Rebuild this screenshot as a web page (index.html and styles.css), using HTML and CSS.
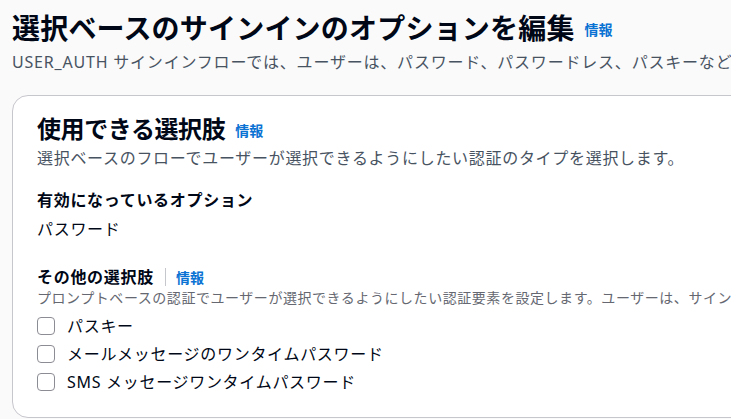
FILE: index.html
```html
<!DOCTYPE html>
<html lang="ja">
<head>
<meta charset="utf-8">
<link rel="stylesheet" href="styles.css">
</head>
<body>
<div class="page">
  <header class="page-header">
    <h1 class="title">選択ベースのサインインのオプションを編集<a class="info info-title" href="#">情報</a></h1>
    <p class="subtitle">USER_AUTH サインインフローでは、ユーザーは、パスワード、パスワードレス、パスキーなどの認証方法から選択してサインインできます。</p>
  </header>
  <section class="card">
    <h2 class="card-title">使用できる選択肢<a class="info info-card" href="#">情報</a></h2>
    <p class="card-desc">選択ベースのフローでユーザーが選択できるようにしたい認証のタイプを選択します。</p>
    <div class="field field-enabled">
      <div class="field-label">有効になっているオプション</div>
      <div class="field-value">パスワード</div>
    </div>
    <div class="field field-other">
      <div class="field-label label-row">その他の選択肢<span class="divider"></span><a class="info info-field" href="#">情報</a></div>
      <div class="field-desc">プロンプトベースの認証でユーザーが選択できるようにしたい認証要素を設定します。ユーザーは、サインイン時にこれらのオプションから選択できます。</div>
      <ul class="checks">
        <li class="check"><span class="box"></span><span class="check-label">パスキー</span></li>
        <li class="check"><span class="box"></span><span class="check-label">メールメッセージのワンタイムパスワード</span></li>
        <li class="check"><span class="box"></span><span class="check-label">SMS メッセージワンタイムパスワード</span></li>
      </ul>
    </div>
  </section>
</div>
</body>
</html>
```
FILE: styles.css
```css
html, body {
  margin: 0;
  padding: 0;
  background: #fafafa;
  overflow: hidden;
  width: 731px;
  height: 419px;
}
body {
  font-family: "Noto Sans", "Noto Sans CJK JP", sans-serif;
  color: #000716;
}
.page {
  padding: 10px 0 0 12px;
}
.page-header {
  display: flex;
  flex-direction: column;
  gap: 4px;
}
.title {
  margin: 0;
  font-size: 28px;
  line-height: 36px;
  font-weight: 700;
  color: #000716;
  white-space: nowrap;
  display: flex;
  align-items: center;
  letter-spacing: 0.2px;
}
.info {
  color: #0972d3;
  text-decoration: none;
  font-weight: 700;
  font-size: 14px;
  line-height: 20px;
  letter-spacing: 0;
}
.info-title {
  margin-left: 10px;
  margin-top: 4px;
}
.subtitle {
  margin: 0;
  font-size: 16px;
  line-height: 24px;
  color: #485362;
  white-space: nowrap;
  letter-spacing: 0.8px;
}
.card {
  margin-top: 21px;
  width: 780px;
  background: #ffffff;
  border: 1px solid #c6c6cd;
  border-radius: 16px;
  padding: 17px 24px 21px 24px;
  box-sizing: border-box;
}
.card-title {
  margin: 0;
  font-size: 24px;
  line-height: 32px;
  font-weight: 700;
  display: flex;
  align-items: center;
  white-space: nowrap;
  letter-spacing: -0.4px;
}
.info-card {
  margin-left: 10px;
  margin-top: 3px;
}
.card-desc {
  margin: 2px 0 0 0;
  font-size: 16px;
  line-height: 22px;
  color: #485362;
  white-space: nowrap;
  letter-spacing: 0.7px;
}
.field-enabled {
  margin-top: 20px;
}
.field-label {
  font-size: 16px;
  line-height: 22px;
  font-weight: 700;
  white-space: nowrap;
  letter-spacing: 0.7px;
}
.field-value {
  margin-top: 7px;
  font-size: 16px;
  line-height: 22px;
  letter-spacing: 0.7px;
}
.field-other {
  margin-top: 26px;
}
.label-row {
  display: flex;
  align-items: center;
}
.divider {
  width: 1px;
  height: 18px;
  background: #c6c6cd;
  margin: 0 10px 0 11px;
}
.info-field {
  margin-top: 1px;
}
.field-desc {
  font-size: 14px;
  line-height: 20px;
  color: #656871;
  white-space: nowrap;
  letter-spacing: 0.55px;
}
.checks {
  list-style: none;
  margin: 4px 0 0 0;
  padding: 0;
}
.check {
  display: flex;
  align-items: center;
  height: 28px;
}
.box {
  width: 18px;
  height: 18px;
  box-sizing: border-box;
  border: 1.5px solid #8c8c94;
  border-radius: 4px;
  background: #fff;
  flex: none;
}
.check-label {
  margin-left: 12px;
  font-size: 16px;
  line-height: 22px;
  white-space: nowrap;
  letter-spacing: 0.7px;
}
```
